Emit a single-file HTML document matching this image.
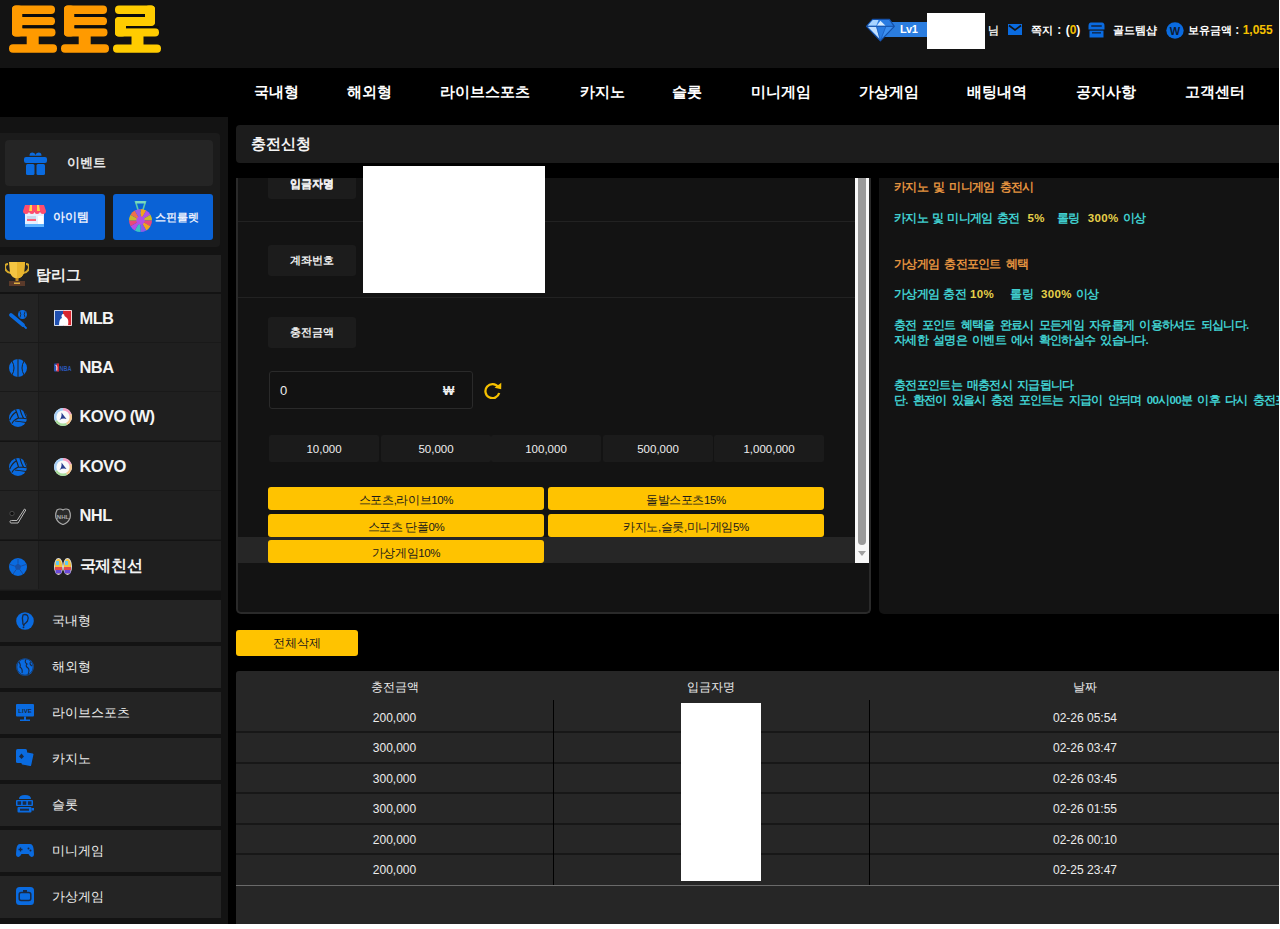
<!DOCTYPE html>
<html><head><meta charset="utf-8">
<style>
html,body{margin:0;padding:0;background:#fff;}
body{width:1280px;height:929px;overflow:hidden;position:relative;font-family:"Liberation Sans",sans-serif;color:#fff;}
#page{position:absolute;left:0;top:0;width:1279px;height:924px;background:#000;overflow:hidden;}
.a{position:absolute;}
.t{position:absolute;white-space:nowrap;}
.nv{position:absolute;top:82px;font-size:15px;font-weight:bold;color:#fff;white-space:nowrap;line-height:20px;}
.hd{position:absolute;top:22px;font-size:11px;font-weight:bold;line-height:16px;color:#fff;white-space:nowrap;}
.lg{position:absolute;left:0;width:221px;height:48px;background:#1f1f1f;border-bottom:1.5px solid #191919;}
.lg .ic{position:absolute;left:0;top:0;width:38px;height:48px;background:#232323;border-right:1px solid #1a1a1a;}
.lg .nm{position:absolute;left:79.5px;top:14px;font-size:16.5px;font-weight:bold;line-height:20px;letter-spacing:-0.6px;white-space:nowrap;color:#f4f4f4;}
.mi{position:absolute;left:0;width:221px;height:42px;background:#242424;}
.mi .nm{position:absolute;left:52px;top:13px;font-size:13px;line-height:16px;color:#eee;white-space:nowrap;}
.mi svg{position:absolute;left:16px;top:12px;}
.lb{position:absolute;left:268px;width:88px;height:31px;background:#1c1c1c;border-radius:3px;font-size:11px;font-weight:bold;line-height:31px;text-align:center;color:#eee;}
.sep{position:absolute;left:238px;width:617px;height:1px;background:#222;}
.amt{position:absolute;top:435px;width:110px;height:27px;background:#1b1b1b;border-radius:2px;font-size:11.5px;line-height:29px;text-align:center;color:#eee;}
.yb{position:absolute;width:276px;height:23px;background:#ffc300;border-radius:3px;font-size:11.5px;line-height:26px;letter-spacing:-0.4px;text-align:center;color:#1a1a1a;}
.inf{position:absolute;left:894px;font-size:11.5px;letter-spacing:-0.7px;word-spacing:2.6px;font-weight:bold;line-height:15px;white-space:nowrap;}
.or{color:#e3923f;}
.cy{color:#40cfcf;}
.ye{color:#e6d04a;letter-spacing:0.3px;}
.tr{position:absolute;left:236px;width:1043px;height:2px;background:#171717;}
.td{position:absolute;font-size:12px;line-height:16px;color:#ececec;text-align:center;white-space:nowrap;}
</style></head><body>
<div id="page">
  <!-- HEADER -->
  <div class="a" style="left:0;top:0;width:1279px;height:68px;background:#131313;"></div>
  <svg class="a" style="left:0;top:0" width="170" height="60" viewBox="0 0 170 60">
    <g fill="#ff9a00">
      <rect x="12" y="5.6" width="43" height="8.4" rx="4"/>
      <rect x="12" y="5.6" width="10.5" height="31" rx="4"/>
      <rect x="12" y="17" width="43" height="8.3" rx="4"/>
      <rect x="12" y="28.2" width="43.5" height="8.4" rx="4"/>
      <rect x="26.7" y="35" width="12" height="10"/>
      <rect x="9" y="44.3" width="48" height="8.4" rx="4"/>
    </g>
    <g fill="#ff9a00" transform="translate(52,0)">
      <rect x="12" y="5.6" width="43" height="8.4" rx="4"/>
      <rect x="12" y="5.6" width="10.5" height="31" rx="4"/>
      <rect x="12" y="17" width="43" height="8.3" rx="4"/>
      <rect x="12" y="28.2" width="43.5" height="8.4" rx="4"/>
      <rect x="26.7" y="35" width="12" height="10"/>
      <rect x="9" y="44.3" width="48" height="8.4" rx="4"/>
    </g>
    <g fill="#ffcc00">
      <rect x="115" y="5.6" width="40" height="8.4" rx="4"/>
      <rect x="145" y="5.6" width="10" height="20" rx="4"/>
      <rect x="115" y="17" width="40" height="9" rx="4"/>
      <rect x="115" y="17" width="11" height="19.6" rx="4"/>
      <rect x="115" y="28.2" width="44" height="8.4" rx="4"/>
      <rect x="131.5" y="35" width="12" height="10"/>
      <rect x="113" y="44.5" width="48" height="8.2" rx="4"/>
    </g>
    <g fill="#0c0c0c">
      <rect x="22.5" y="14" width="33" height="3"/>
      <rect x="22.5" y="25.3" width="33" height="2.9"/>
      <rect x="74.5" y="14" width="33" height="3"/>
      <rect x="74.5" y="25.3" width="33" height="2.9"/>
      <rect x="115" y="14" width="30" height="3"/>
      <rect x="126" y="26" width="33" height="2.2"/>
    </g>
  </svg>
  <!-- header right -->
  
  <div class="a" style="left:885px;top:22px;width:42px;height:15px;background:#2b7ddf;"></div>
  <svg class="a" style="left:865px;top:18px" width="31" height="25" viewBox="-1 -1 31 25">
    <polygon points="6.6,0.3 23.4,0.3 28.3,7.3 14.4,21.8 0.5,7.3" fill="#2a7ce2" stroke="#1550a8" stroke-width="1.2" stroke-linejoin="round"/>
    <polygon points="6.8,1 12.5,1 10.3,6.8 1.6,6.8" fill="#a8d4ff"/>
    <polygon points="10.8,6.8 14.4,1.8 19.6,6.8" fill="#d6ecff"/>
    <polygon points="1.8,7.8 10.2,7.8 13.6,19.8" fill="#c2e0ff"/>
    <polygon points="19.8,7.8 27,7.8 16,19" fill="#3d8ff0"/>
    <polyline points="0.8,7.3 28,7.3" stroke="#1550a8" stroke-width="1"/>
    <polyline points="10.5,7.3 14.4,21.5 19.9,7.3" fill="none" stroke="#1a5fc0" stroke-width="0.8"/>
  </svg>
  <div class="t" style="left:900px;top:22px;font-size:11px;font-weight:bold;line-height:15px;letter-spacing:-0.6px;color:#fff;">Lv1</div>
  <div class="a" style="left:927px;top:13px;width:58px;height:36px;background:#fff;"></div>
  <div class="hd" style="left:988px;color:#e8e8e8;">님</div>
  <svg class="a" style="left:1008px;top:24px" width="14" height="11" viewBox="0 0 14 11">
    <rect x="0" y="0" width="14" height="11" fill="#0a6be0"/>
    <polyline points="1,1.5 7,6 13,1.5" fill="none" stroke="#141414" stroke-width="1.6"/>
  </svg>
  <div class="hd" style="left:1031px;">쪽지<span style="font-size:12px;word-spacing:1px"> : (<span style="color:#f5c000">0</span>)</span></div>
  <svg class="a" style="left:1088px;top:22px" width="17" height="16" viewBox="0 0 17 16">
    <path d="M3,0.5 L14,0.5 Q16.5,0.5 16.5,4 L16.5,7.5 L0.5,7.5 L0.5,4 Q0.5,0.5 3,0.5 Z" fill="#0a6be0"/>
    <rect x="3" y="3.2" width="11" height="1.6" rx="0.8" fill="#10223f"/>
    <rect x="1.5" y="8.6" width="14" height="6.9" fill="#0a6be0"/>
    <rect x="4" y="10.2" width="9" height="1.3" fill="#10223f"/>
  </svg>
  <div class="hd" style="left:1113px;">골드템샵</div>
  <svg class="a" style="left:1166px;top:22px" width="18" height="17" viewBox="0 0 18 17">
    <ellipse cx="9" cy="8.5" rx="8.7" ry="8.2" fill="#0a6be0"/>
    <text x="9" y="13" font-family="Liberation Sans" font-weight="bold" font-size="11" text-anchor="middle" fill="#0d1a33">W</text>
  </svg>
  <div class="hd" style="left:1188px;">보유금액<span style="font-size:12px"> : <span style="color:#f5c000">1,055</span></span></div>

  <!-- NAV -->
  <div class="nv" style="left:254px">국내형</div>
  <div class="nv" style="left:347px">해외형</div>
  <div class="nv" style="left:440px">라이브스포츠</div>
  <div class="nv" style="left:580px">카지노</div>
  <div class="nv" style="left:672px">슬롯</div>
  <div class="nv" style="left:751px">미니게임</div>
  <div class="nv" style="left:859px">가상게임</div>
  <div class="nv" style="left:967px">배팅내역</div>
  <div class="nv" style="left:1076px">공지사항</div>
  <div class="nv" style="left:1185px">고객센터</div>

  <!-- SIDEBAR -->
  <div class="a" style="left:0;top:117px;width:228px;height:807px;background:#131313;"></div>
  <div class="a" style="left:0;top:133px;width:220px;height:114px;background:#1b1b1b;border-radius:0 4px 4px 0;"></div>
  <div class="a" style="left:5px;top:140px;width:208px;height:46px;background:#252525;border-radius:4px;"></div>
  <svg class="a" style="left:24px;top:152px" width="23" height="23" viewBox="0 0 23 23">
    <path d="M5.5,3.8 Q5.5,0.5 8.5,0.5 Q11,0.5 11.5,3 Q12,0.5 14.5,0.5 Q17.5,0.5 17.5,3.8 Z" fill="#0a6be0"/>
    <rect x="0" y="5" width="23" height="6" rx="2" fill="#0a6be0"/>
    <rect x="2" y="12" width="8.5" height="11" rx="1.5" fill="#0a6be0"/>
    <rect x="12.5" y="12" width="8.5" height="11" rx="1.5" fill="#0a6be0"/>
  </svg>
  <div class="t" style="left:67px;top:155px;font-size:13px;font-weight:bold;line-height:16px;color:#e6e6e6;">이벤트</div>
  <div class="a" style="left:5px;top:194px;width:100px;height:46px;background:#0a62d6;border-radius:3px;"></div>
  <div class="a" style="left:113px;top:194px;width:100px;height:46px;background:#0a62d6;border-radius:3px;"></div>
  <svg class="a" style="left:23px;top:205px" width="23" height="22" viewBox="0 0 23 22">
    <rect x="2" y="7" width="19" height="15" fill="#e6f0ff"/>
    <rect x="2" y="19" width="19" height="3" fill="#5fb3ff"/>
    <rect x="4" y="11" width="9" height="5" fill="#c9d8ee"/>
    <rect x="4" y="14" width="9" height="2" fill="#ff6078"/>
    <rect x="15" y="11" width="5" height="8" fill="#fff"/>
    <path d="M2,0 L21,0 L23,6 Q23,9 20,9 Q17,9 17,6 Q17,9 14,9 Q11.5,9 11.5,6 Q11.5,9 9,9 Q6,9 6,6 Q6,9 3,9 Q0,9 0,6 Z" fill="#ff4d6d"/>
    <path d="M7,0 L9,0 L9,6 L6,6 Z M14,0 L16,0 L17,6 L14,6 Z" fill="#ffd54a"/>
  </svg>
  <div class="t" style="left:53px;top:209px;font-size:11.5px;font-weight:bold;line-height:16px;color:#e8eefc;">아이템</div>
  <svg class="a" style="left:129px;top:201px" width="23" height="31" viewBox="0 0 23 31">
    <path d="M6.5,0.5 L16.5,0.5 L13,12 L10,12 Z" fill="none" stroke="#5cc9a8" stroke-width="1.6"/>
    <rect x="6.5" y="0" width="10" height="2.5" fill="#7ad9c0"/>
    <path d="M11.5,19.5 L11.50,8.00 A11.5,11.5 0 0 1 17.25,9.54 Z" fill="#f2a41e"/><path d="M11.5,19.5 L17.25,9.54 A11.5,11.5 0 0 1 21.46,13.75 Z" fill="#b44fe6"/><path d="M11.5,19.5 L21.46,13.75 A11.5,11.5 0 0 1 23.00,19.50 Z" fill="#c9b82e"/><path d="M11.5,19.5 L23.00,19.50 A11.5,11.5 0 0 1 21.46,25.25 Z" fill="#e8487c"/><path d="M11.5,19.5 L21.46,25.25 A11.5,11.5 0 0 1 17.25,29.46 Z" fill="#f2a41e"/><path d="M11.5,19.5 L17.25,29.46 A11.5,11.5 0 0 1 11.50,31.00 Z" fill="#8e5ae8"/><path d="M11.5,19.5 L11.50,31.00 A11.5,11.5 0 0 1 5.75,29.46 Z" fill="#3cc3c3"/><path d="M11.5,19.5 L5.75,29.46 A11.5,11.5 0 0 1 1.54,25.25 Z" fill="#b44fe6"/><path d="M11.5,19.5 L1.54,25.25 A11.5,11.5 0 0 1 0.00,19.50 Z" fill="#e8487c"/><path d="M11.5,19.5 L0.00,19.50 A11.5,11.5 0 0 1 1.54,13.75 Z" fill="#c9b82e"/><path d="M11.5,19.5 L1.54,13.75 A11.5,11.5 0 0 1 5.75,9.54 Z" fill="#f0704a"/><path d="M11.5,19.5 L5.75,9.54 A11.5,11.5 0 0 1 11.50,8.00 Z" fill="#9a5ce6"/>
    <circle cx="11.5" cy="19.5" r="4.2" fill="#b44fe6"/>
  </svg>
  <div class="t" style="left:155px;top:209px;font-size:11px;font-weight:bold;line-height:16px;color:#e8eefc;">스핀룰렛</div>

  <!-- top league -->
  <div class="a" style="left:0;top:255px;width:221px;height:37px;background:#222;"></div>
  <svg class="a" style="left:5px;top:262px" width="24" height="24" viewBox="0 0 24 24">
    <path d="M3,2 Q0,2 0,5 Q0,10 6,11" fill="none" stroke="#d6a92a" stroke-width="2"/>
    <path d="M21,2 Q24,2 24,5 Q24,10 18,11" fill="none" stroke="#d6a92a" stroke-width="2"/>
    <path d="M4,0 L20,0 L19,11 Q17,16 12,16.5 Q7,16 5,11 Z" fill="#f4c542"/>
    <path d="M12,0 L20,0 L19,11 Q17,16 12,16.5 Z" fill="#e9b52d"/>
    <rect x="10.5" y="16" width="3" height="3" fill="#c98f1d"/>
    <rect x="4" y="19" width="16" height="5" fill="#5a3a2a"/>
    <rect x="9" y="20.5" width="6" height="1.5" fill="#e0b040"/>
  </svg>
  <div class="t" style="left:36px;top:264.5px;font-size:15px;font-weight:bold;line-height:20px;color:#f2f2f2;">탑리그</div>

  <div class="lg" style="top:294px"><div class="ic"></div><div class="nm">MLB</div>
    <svg class="a" style="left:9px;top:16px" width="19" height="19" viewBox="0 0 19 19">
      <line x1="2" y1="5" x2="14" y2="15" stroke="#0a6be0" stroke-width="3.6" stroke-linecap="round"/>
      <line x1="14" y1="15" x2="17" y2="18" stroke="#0a6be0" stroke-width="1.8" stroke-linecap="round"/>
      <circle cx="13.5" cy="4.5" r="4.5" fill="#0a6be0"/>
      <path d="M11,1.5 Q12.5,4.5 11,7.5 M16,1.5 Q14.5,4.5 16,7.5" fill="none" stroke="#222" stroke-width="0.8"/>
    </svg>
    <svg class="a" style="left:54px;top:15.5px" width="18" height="16" viewBox="0 0 18 16">
      <rect x="0" y="0" width="18" height="16" rx="1" fill="#fff"/>
      <rect x="0.8" y="0.8" width="9" height="14.4" fill="#1f4fb0"/>
      <rect x="9" y="0.8" width="8.2" height="14.4" fill="#d8262f"/>
      <path d="M5,15.2 Q5,9 8,8 Q6.5,6 8.5,4 Q10.5,3.5 10.5,6 L13,8 Q15,10 14,15.2 Z" fill="#fff"/>
    </svg>
  </div>
  <div class="lg" style="top:343px"><div class="ic"></div><div class="nm">NBA</div>
    <svg class="a" style="left:9px;top:16px" width="18" height="18" viewBox="0 0 18 18">
      <circle cx="9" cy="9" r="9" fill="#0a6be0"/>
      <path d="M9,0 L9,18 M3,2 Q7,9 3,16 M15,2 Q11,9 15,16" fill="none" stroke="#222" stroke-width="1"/>
    </svg>
    <svg class="a" style="left:54px;top:20px" width="18" height="9" viewBox="0 0 18 9">
      <rect x="0" y="0.5" width="5" height="8" rx="0.8" fill="#2a56b8"/>
      <rect x="2.5" y="0.5" width="2.5" height="8" fill="#d8262f"/>
      <path d="M1.8,2 Q3.5,3 2.8,7.5" stroke="#fff" stroke-width="1" fill="none"/>
      <text x="5.6" y="7.8" font-family="Liberation Sans" font-weight="bold" font-size="7" textLength="12" lengthAdjust="spacingAndGlyphs" fill="#2a56b8">NBA</text>
    </svg>
  </div>
  <div class="lg" style="top:392px"><div class="ic"></div><div class="nm">KOVO (W)</div>
    <svg class="a" style="left:9px;top:16.5px" width="18" height="18" viewBox="0 0 18 18">
      <circle cx="9" cy="9" r="9" fill="#0a6be0"/>
      <path d="M6.5,0.5 Q8.5,5 9.5,9 M11,0.3 Q12,4.5 14.5,9.2 M15,2 Q16,5 17.8,8.8 M9.5,9 Q13,9.3 18,9.8 M5.8,12 Q10.5,12.5 17,13.5 M9.5,9 Q5,10.5 3,14.5 M7,3 Q3,5.5 0.8,11" fill="none" stroke="#222" stroke-width="1.1"/>
    </svg>
    <svg class="a" style="left:54px;top:16px" width="18" height="18" viewBox="0 0 18 18">
      <circle cx="9" cy="9" r="9" fill="#f2f2f2"/>
      <path d="M9,0 A9,9 0 0 1 17.5,6 L13,8 A4.5,4.5 0 0 0 9,4.5 Z" fill="#f5a0c4"/>
      <path d="M17.5,6 A9,9 0 0 1 13,17 L11,13 A4.5,4.5 0 0 0 13,8 Z" fill="#f7c890"/>
      <path d="M13,17 A9,9 0 0 1 1,13 L5,11 A4.5,4.5 0 0 0 11,13 Z" fill="#a8dc9c"/>
      <path d="M1,13 A9,9 0 0 1 9,0 L9,4.5 A4.5,4.5 0 0 0 5,11 Z" fill="#a6cef5"/>
      <circle cx="9" cy="9" r="6.6" fill="#fafafa"/>
      <path d="M7.5,4.5 Q10,8 12.5,11 Q9,9.8 5.5,12 Q8,9 7.5,4.5 Z" fill="#2a3d8f"/>
    </svg>
  </div>
  <div class="lg" style="top:442px"><div class="ic"></div><div class="nm">KOVO</div>
    <svg class="a" style="left:9px;top:16px" width="18" height="18" viewBox="0 0 18 18">
      <circle cx="9" cy="9" r="9" fill="#0a6be0"/>
      <path d="M6.5,0.5 Q8.5,5 9.5,9 M11,0.3 Q12,4.5 14.5,9.2 M15,2 Q16,5 17.8,8.8 M9.5,9 Q13,9.3 18,9.8 M5.8,12 Q10.5,12.5 17,13.5 M9.5,9 Q5,10.5 3,14.5 M7,3 Q3,5.5 0.8,11" fill="none" stroke="#222" stroke-width="1.1"/>
    </svg>
    <svg class="a" style="left:54px;top:15.5px" width="18" height="18" viewBox="0 0 18 18">
      <circle cx="9" cy="9" r="9" fill="#f2f2f2"/>
      <path d="M9,0 A9,9 0 0 1 17.5,6 L13,8 A4.5,4.5 0 0 0 9,4.5 Z" fill="#f5a0c4"/>
      <path d="M17.5,6 A9,9 0 0 1 13,17 L11,13 A4.5,4.5 0 0 0 13,8 Z" fill="#f7c890"/>
      <path d="M13,17 A9,9 0 0 1 1,13 L5,11 A4.5,4.5 0 0 0 11,13 Z" fill="#a8dc9c"/>
      <path d="M1,13 A9,9 0 0 1 9,0 L9,4.5 A4.5,4.5 0 0 0 5,11 Z" fill="#a6cef5"/>
      <circle cx="9" cy="9" r="6.6" fill="#fafafa"/>
      <path d="M7.5,4.5 Q10,8 12.5,11 Q9,9.8 5.5,12 Q8,9 7.5,4.5 Z" fill="#2a3d8f"/>
    </svg>
  </div>
  <div class="lg" style="top:491px"><div class="ic"></div><div class="nm">NHL</div>
    <svg class="a" style="left:9px;top:17px" width="18" height="17" viewBox="0 0 18 17">
      <circle cx="3" cy="5.5" r="2.2" fill="#111" stroke="#666" stroke-width="0.6"/>
      <path d="M15.5,1 L16.8,2 L9,15 L2,15 Q1,15 1,13.5 Q1,12.5 2.5,12.5 L8,12.5 Z" fill="none" stroke="#bbb" stroke-width="1"/>
    </svg>
    <svg class="a" style="left:55px;top:16.5px" width="16" height="17" viewBox="0 0 16 17">
      <path d="M2,2 Q5,0 8,2 Q11,0 14,2 Q16,6 15,10 Q13,15 8,16.5 Q3,15 1,10 Q0,6 2,2 Z" fill="#2a2a2a" stroke="#aaa" stroke-width="1.2"/>
      <text x="8" y="11" font-family="Liberation Sans" font-weight="bold" font-size="6" text-anchor="middle" fill="#aaa">NHL</text>
    </svg>
  </div>
  <div class="lg" style="top:541px;height:48.5px"><div class="ic"></div><div class="nm" style="font-size:15.5px;letter-spacing:-0.2px;top:14.5px">국제친선</div>
    <svg class="a" style="left:9px;top:16.5px" width="18" height="18" viewBox="0 0 18 18">
      <circle cx="9" cy="9" r="9" fill="#0a6be0"/>
      <polygon points="9,5.5 12.3,8 11,11.8 7,11.8 5.7,8" fill="#1750a8"/>
      <path d="M9,5.5 L9,1 M12.3,8 L17,6.5 M11,11.8 L14,16 M7,11.8 L4,16 M5.7,8 L1,6.5" stroke="#1a4a9a" stroke-width="0.9"/>
    </svg>
    <svg class="a" style="left:54px;top:16.5px" width="18" height="17" viewBox="0 0 18 17">
      <ellipse cx="4.5" cy="8.5" rx="4.5" ry="8.5" fill="#ddd"/>
      <ellipse cx="13.5" cy="8.5" rx="4.5" ry="8.5" fill="#ddd"/>
      <ellipse cx="4.5" cy="8.5" rx="3.6" ry="7.6" fill="#f3c03a"/>
      <ellipse cx="13.5" cy="8.5" rx="3.6" ry="7.6" fill="#f3c03a"/>
      <rect x="1" y="9" width="7" height="3" fill="#e24a4a"/>
      <rect x="10" y="9" width="7" height="3" fill="#e24a4a"/>
      <rect x="1.5" y="12" width="6" height="3.5" fill="#6a4ad8"/>
      <rect x="10.5" y="12" width="6" height="3.5" fill="#6a4ad8"/>
      <rect x="2" y="3" width="3" height="4" fill="#60c8f0"/>
      <rect x="11" y="3" width="3" height="4" fill="#60c8f0"/>
    </svg>
  </div>
  <div class="a" style="left:0;top:591px;width:221px;height:9px;background:#111;"></div>

  <!-- menu items -->
  <div class="mi" style="top:600px"><div class="nm">국내형</div>
    <svg width="18" height="18" viewBox="0 0 18 18" style="top:11.5px;left:15.5px">
      <circle cx="9" cy="9" r="8.8" fill="#0a6be0"/>
      <path d="M7,3 Q9.5,1.8 11.5,3.5 Q13,6 11.5,9 Q10,11 8.5,12 L7.8,13.5 Q6.5,12 6.8,10 Q5.8,6 7,3 Z" fill="#0a6be0" stroke="#1a2a44" stroke-width="1.3"/><circle cx="7.5" cy="15.3" r="0.9" fill="#1a2a44"/>
    </svg>
  </div>
  <div class="mi" style="top:646px"><div class="nm">해외형</div>
    <svg width="18" height="18" viewBox="0 0 18 18" style="top:11.5px;left:15.5px">
      <circle cx="9" cy="9" r="8.8" fill="#0a6be0"/>
      <path d="M3,4 Q5,7 4,9 Q7,11 6,15 M10,1.5 Q8,4 11,6 Q9,8 12,10 Q14,12 12,16.5 M14.5,4 Q13,6 16,8" fill="none" stroke="#1a2a44" stroke-width="1.1"/>
      <circle cx="9" cy="9" r="8.2" fill="none" stroke="#1a2a44" stroke-width="0.7"/>
    </svg>
  </div>
  <div class="mi" style="top:692px"><div class="nm">라이브스포츠</div>
    <svg width="18" height="18" viewBox="0 0 18 18" style="top:12px;left:16px">
      <rect x="0" y="0" width="18" height="12.5" rx="1" fill="#0a6be0"/>
      <text x="9" y="9" font-family="Liberation Sans" font-weight="bold" font-size="6" text-anchor="middle" fill="#1a2a44">LIVE</text>
      <rect x="8" y="12.5" width="2" height="3.5" fill="#0a6be0"/>
      <rect x="4" y="15.5" width="10" height="1.5" fill="#0a6be0"/>
    </svg>
  </div>
  <div class="mi" style="top:738px"><div class="nm">카지노</div>
    <svg width="18" height="18" viewBox="0 0 18 18" style="top:11px;left:16px">
      <rect x="6" y="3" width="11" height="14" rx="1.5" transform="rotate(12 11.5 10)" fill="#0a6be0" stroke="#242424" stroke-width="1.2"/>
      <rect x="0" y="0" width="11" height="14" rx="1.5" fill="#0a6be0"/>
      <path d="M5.5,4.5 L8,7.5 L5.5,10 L3,7.5 Z" fill="#1a2a44"/>
    </svg>
  </div>
  <div class="mi" style="top:784px"><div class="nm">슬롯</div>
    <svg width="18" height="18" viewBox="0 0 18 18" style="top:11px;left:16px">
      <path d="M3,4 Q3,0 9,0 Q15,0 15,4 Z" fill="#0a6be0"/>
      <rect x="0" y="5" width="17" height="6" rx="1" fill="#0a6be0"/>
      <rect x="1.5" y="6.3" width="3.6" height="3.5" fill="#1a2a44"/>
      <rect x="6.7" y="6.3" width="3.6" height="3.5" fill="#1a2a44"/>
      <rect x="11.9" y="6.3" width="3.6" height="3.5" fill="#1a2a44"/>
      <rect x="1.5" y="12" width="14" height="5.5" rx="1" fill="#0a6be0"/>
      <rect x="4" y="13.7" width="9" height="2" fill="#1a2a44"/>
      <rect x="15.5" y="13" width="2.5" height="2.5" fill="#0a6be0"/>
    </svg>
  </div>
  <div class="mi" style="top:830px"><div class="nm">미니게임</div>
    <svg width="18" height="15" viewBox="0 0 18 15" style="top:13px;left:16px">
      <path d="M4,1 L14,1 Q17,1 17.6,6 L18,11 Q18,14 15.5,14 Q14,14 12.5,11 L5.5,11 Q4,14 2.5,14 Q0,14 0,11 L0.4,6 Q1,1 4,1 Z" fill="#0a6be0"/>
      <path d="M4.5,4.5 L4.5,8.5 M2.5,6.5 L6.5,6.5" stroke="#1a2a44" stroke-width="1.3"/>
      <circle cx="12.5" cy="5.5" r="1" fill="#1a2a44"/>
      <circle cx="14.5" cy="7.5" r="1" fill="#1a2a44"/>
    </svg>
  </div>
  <div class="mi" style="top:876px"><div class="nm">가상게임</div>
    <svg width="18" height="18" viewBox="0 0 18 18" style="top:11px;left:16px">
      <rect x="0" y="0" width="18" height="18" rx="3.5" fill="#0a6be0"/>
      <rect x="3.2" y="5.5" width="11.6" height="8" rx="2" fill="#0a6be0" stroke="#1a2a44" stroke-width="1.5"/>
      <rect x="7" y="3" width="4" height="2" fill="#1a2a44"/>
    </svg>
  </div>

  <!-- CONTENT -->
  <div class="a" style="left:236px;top:125px;width:1043px;height:38px;background:#1c1c1c;border-radius:4px 0 0 4px;"></div>
  <div class="t" style="left:251px;top:134px;font-size:15px;font-weight:bold;line-height:20px;color:#f4f4f4;">충전신청</div>

  <!-- form panel -->
  <div class="a" style="left:236px;top:178px;width:631px;height:434px;background:#131313;border:2px solid #2a2a2a;border-top:none;border-radius:0 0 5px 5px;overflow:hidden;">
  </div>
  <div class="lb" style="top:168px;">입금자명</div>
  <div class="a" style="left:236px;top:163px;width:640px;height:15px;background:#000;"></div>
  <div class="t" style="left:268px;top:178px;width:88px;height:20px;overflow:hidden;"><div style="position:absolute;left:0;top:-9.5px;width:88px;height:31px;line-height:31px;text-align:center;font-size:11px;font-weight:bold;color:#eee;">입금자명</div></div>
  <div class="sep" style="top:221px"></div>
  <div class="lb" style="top:244.5px;">계좌번호</div>
  <div class="sep" style="top:297px"></div>
  <div class="a" style="left:363px;top:166px;width:182px;height:127px;background:#fff;"></div>
  <div class="lb" style="top:317px;">충전금액</div>
  <div class="a" style="left:269px;top:371px;width:202px;height:36px;border:1px solid #2a2a2a;border-radius:3px;background:#121212;"></div>
  <div class="t" style="left:280px;top:383px;font-size:13px;line-height:16px;color:#eee;">0</div>
  <div class="t" style="left:443px;top:383px;font-size:12px;font-weight:bold;line-height:16px;color:#eee;">₩</div>
  <svg class="a" style="left:484px;top:382px" width="18" height="17" viewBox="0 0 18 17">
    <path d="M14.2,5.2 A7,7 0 1 0 15.2,11" fill="none" stroke="#f5c000" stroke-width="2.3"/>
    <polygon points="10.5,5.8 17.3,0.8 17.2,7.2" fill="#f5c000"/>
  </svg>
  <div class="amt" style="left:269px">10,000</div>
  <div class="amt" style="left:381px">50,000</div>
  <div class="amt" style="left:491px">100,000</div>
  <div class="amt" style="left:603px">500,000</div>
  <div class="amt" style="left:714px">1,000,000</div>
  <div class="a" style="left:238px;top:537px;width:617px;height:26px;background:#262626;"></div>
  <div class="yb" style="left:268px;top:487px">스포츠,라이브10%</div>
  <div class="yb" style="left:548px;top:487px">돌발스포츠15%</div>
  <div class="yb" style="left:268px;top:513.5px">스포츠 단폴0%</div>
  <div class="yb" style="left:548px;top:513.5px">카지노,슬롯,미니게임5%</div>
  <div class="yb" style="left:268px;top:540px">가상게임10%</div>
  <!-- scrollbar -->
  <div class="a" style="left:855px;top:178px;width:14px;height:385px;background:#f8f8f8;"></div>
  <div class="a" style="left:858px;top:178px;width:8px;height:367px;background:#9a9a9a;border-radius:0 0 4px 4px;"></div>
  <svg class="a" style="left:857px;top:550px" width="10" height="8" viewBox="0 0 10 8"><polygon points="1,1 9,1 5,6" fill="#a0a0a0"/></svg>

  <!-- info panel -->
  <div class="a" style="left:879px;top:178px;width:400px;height:436px;background:#131313;border-radius:0 0 0 5px;"></div>
  <div class="inf or" style="top:180px">카지노 및 미니게임 충전시</div>
  <div class="inf cy" style="top:210.5px;word-spacing:1.6px">카지노 및 미니게임 충전 &nbsp;<span class="ye">5%</span> &nbsp;&nbsp;롤링 &nbsp;<span class="ye">300%</span> 이상</div>
  <div class="inf or" style="top:256.5px">가상게임 충전포인트 혜택</div>
  <div class="inf cy" style="top:287px;word-spacing:1.6px">가상게임 충전 <span class="ye">10%</span> &nbsp;&nbsp;&nbsp;롤링 &nbsp;<span class="ye">300%</span> 이상</div>
  <div class="inf cy" style="top:317.5px">충전 포인트 혜택을 완료시 모든게임 자유롭게 이용하셔도 되십니다.<br>자세한 설명은 이벤트 에서 확인하실수 있습니다.</div>
  <div class="inf cy" style="top:378px">충전포인트는 매충전시 지급됩니다<br>단. 환전이 있을시 충전 포인트는 지급이 안되며 00시00분 이후 다시 충전포인트 지급됩니다.</div>

  <!-- delete all -->
  <div class="a" style="left:236px;top:630px;width:122px;height:26px;background:#ffc300;border-radius:3px;font-size:12px;line-height:26px;text-align:center;color:#1a1a1a;">전체삭제</div>

  <!-- table -->
  <div class="a" style="left:236px;top:671px;width:1043px;height:253px;background:#262626;border-radius:3px 0 0 0;"></div>
  <div class="td" style="left:236px;width:317px;top:679px;font-size:11.5px">충전금액</div>
  <div class="td" style="left:553px;width:316px;top:679px;font-size:11.5px">입금자명</div>
  <div class="td" style="left:869px;width:432px;top:679px;font-size:11.5px">날짜</div>
  <div class="tr" style="top:731px"></div>
  <div class="tr" style="top:762px"></div>
  <div class="tr" style="top:792px"></div>
  <div class="tr" style="top:823px"></div>
  <div class="tr" style="top:853px"></div>
  <div class="a" style="left:236px;top:885px;width:1043px;height:1px;background:#6a6a6a;"></div>
  <div class="a" style="left:553px;top:700px;width:1px;height:185px;background:#000;"></div>
  <div class="a" style="left:869px;top:700px;width:1px;height:185px;background:#000;"></div>
  <div class="td" style="left:236px;width:317px;top:709.5px;">200,000</div>
  <div class="td" style="left:869px;width:432px;top:709.5px;">02-26 05:54</div>
  <div class="td" style="left:236px;width:317px;top:740px;">300,000</div>
  <div class="td" style="left:869px;width:432px;top:740px;">02-26 03:47</div>
  <div class="td" style="left:236px;width:317px;top:770.5px;">300,000</div>
  <div class="td" style="left:869px;width:432px;top:770.5px;">02-26 03:45</div>
  <div class="td" style="left:236px;width:317px;top:801px;">300,000</div>
  <div class="td" style="left:869px;width:432px;top:801px;">02-26 01:55</div>
  <div class="td" style="left:236px;width:317px;top:831.5px;">200,000</div>
  <div class="td" style="left:869px;width:432px;top:831.5px;">02-26 00:10</div>
  <div class="td" style="left:236px;width:317px;top:862px;">200,000</div>
  <div class="td" style="left:869px;width:432px;top:862px;">02-25 23:47</div>
  <div class="a" style="left:681px;top:703px;width:80px;height:178px;background:#fff;"></div>
</div>
</body></html>
